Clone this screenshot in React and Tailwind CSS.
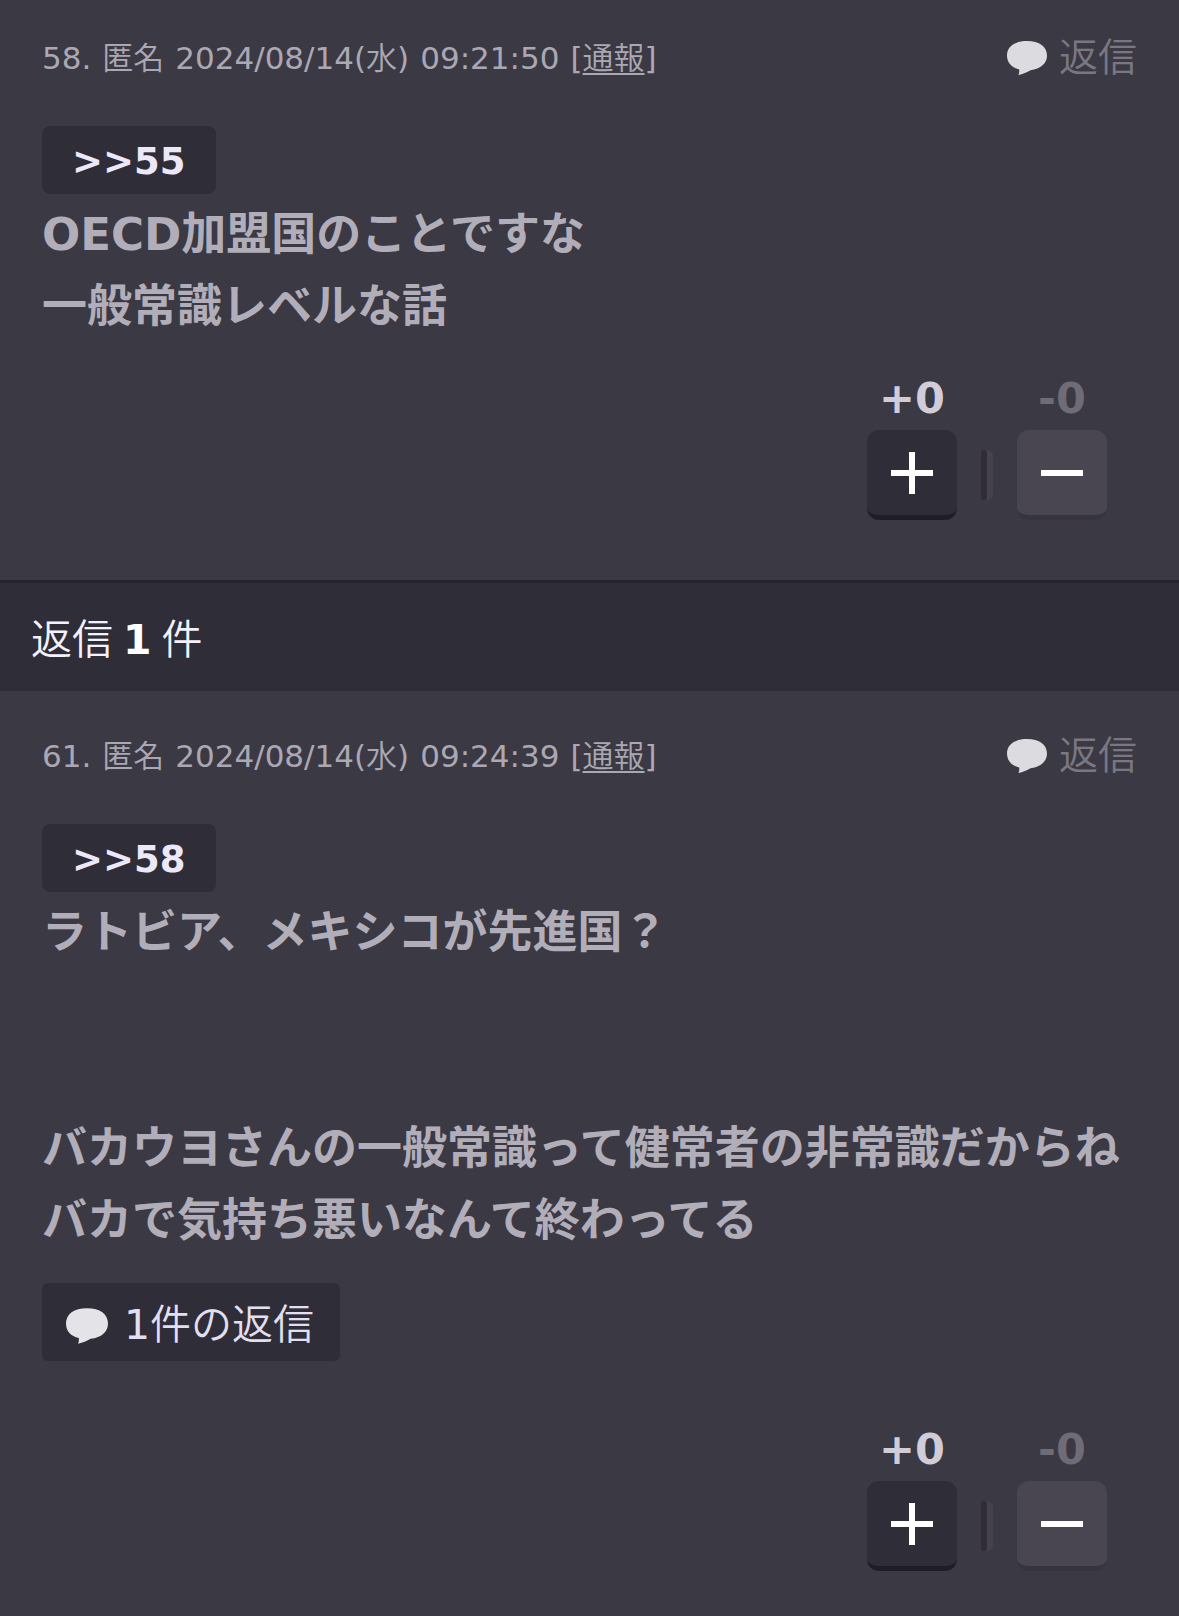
import React from 'react';
import clsx from 'clsx';

const comments = [
  {
    id: 58,
    name: '匿名',
    date: '2024/08/14',
    weekday: '水',
    time: '09:21:50',
    replyTo: 55,
    body: 'OECD加盟国のことですな\n一般常識レベルな話',
    replies: 0,
    plus: 0,
    minus: 0,
  },
  {
    id: 61,
    name: '匿名',
    date: '2024/08/14',
    weekday: '水',
    time: '09:24:39',
    replyTo: 58,
    body: 'ラトビア、メキシコが先進国？\n\n\nバカウヨさんの一般常識って健常者の非常識だからね\nバカで気持ち悪いなんて終わってる',
    replies: 1,
    plus: 0,
    minus: 0,
  },
];

const BubbleIcon = ({ className }) => (
  <svg viewBox="0 0 40 34" fill="currentColor" className={className} aria-hidden="true">
    <path d="M20 0C32.5 0 40 5.6 40 14.6C40 22.6 33.8 28 23.5 29.2C20 31.2 16 33 11.4 34C12.2 32.4 12.4 30.8 12.2 28.4C4.6 26.8 0 21.8 0 14.6C0 5.6 7.5 0 20 0Z" />
  </svg>
);

const VoteButtons = ({ plus, minus }) => (
  <div className="flex justify-end pr-[30px]">
    <div className="w-[90px]">
      <p className="text-center text-[43px] leading-[64px] font-bold text-[#d0cdd9]">+{plus}</p>
      <button
        aria-label="プラス"
        className="flex h-[90px] w-full items-center justify-center rounded-xl border-b-5 border-[#201d28] bg-[#2f2d37]"
      >
        <svg viewBox="0 0 42 42" className="h-[42px] w-[42px] fill-white">
          <path d="M18 0h6v18h18v6H24v18h-6V24H0v-6h18z" />
        </svg>
      </button>
    </div>
    <div className="mx-6 mt-[84px] flex h-[50px] w-3 rounded-md bg-[#45424d]">
      <div className="h-full w-1.5 rounded-md bg-[#302d38]" />
    </div>
    <div className="w-[90px]">
      <p className="text-center text-[43px] leading-[64px] font-bold text-[#6f6c77]">-{minus}</p>
      <button
        aria-label="マイナス"
        className="flex h-[90px] w-full items-center justify-center rounded-xl border-b-5 border-[#37343f] bg-[#494651]"
      >
        <svg viewBox="0 0 42 42" className="h-[42px] w-[42px] fill-white">
          <path d="M0 18h42v6H0z" />
        </svg>
      </button>
    </div>
  </div>
);

const Comment = ({ comment, first }) => (
  <article className={clsx('px-[42px]', first ? 'pt-[33px] pb-[60px]' : 'pt-10 pb-11')}>
    <header className="flex items-center justify-between">
      <div className="flex items-center gap-[11px] text-[31px] leading-[50px] text-[#aba8b4]">
        <span>{comment.id}.</span>
        <span className="font-[350]">{comment.name}</span>
        <span>
          {comment.date}(<span className="font-[350]">{comment.weekday}</span>)
        </span>
        <span>{comment.time}</span>
        <span>
          [<a href="#report" className="font-[350] underline decoration-2 underline-offset-4">通報</a>]
        </span>
      </div>
      <button className="flex items-center gap-3 text-[39px] leading-[50px] font-[350] text-[#7a7782]">
        <BubbleIcon className="h-[34px] w-10 text-[#dcdbe0]" />
        返信
      </button>
    </header>

    <a
      href={`#comment-${comment.replyTo}`}
      className="mt-[43px] inline-block rounded-lg bg-[#2f2d37] px-[30px] pt-1 text-[37px] leading-[64px] font-bold text-[#ebe8f8]"
    >
      &gt;&gt;{comment.replyTo}
    </a>
    <p className="mt-[5px] text-[45px] leading-[72px] font-bold whitespace-pre-line text-[#b1aeba]">
      {comment.body}
    </p>

    {comment.replies > 0 && (
      <button className="mt-[26px] mb-[33px] flex h-[78px] items-center gap-4 rounded-md bg-[#2f2d37] pt-2 pr-[26px] pl-6 text-[41px] text-[#e2dff0]">
        <BubbleIcon className="h-9 w-[42px] text-[#e4e3e8]" />
        <span>
          {comment.replies}
          <span className="font-[350]">件の返信</span>
        </span>
      </button>
    )}

    <div className="pt-[23px]">
      <VoteButtons plus={comment.plus} minus={comment.minus} />
    </div>
  </article>
);

const App = () => {
  const [parent, ...replies] = comments;

  return (
    <main className="min-h-screen bg-[#3b3943] font-['DejaVu_Sans','Noto_Sans_CJK_JP',sans-serif]">
      <Comment comment={parent} first />
      <h2 className="flex gap-2.5 border-t-3 border-[#25232d] bg-[#2f2d37] px-[31px] pt-1.5 text-[41px] leading-[102px] font-[350] text-[#f4f1fc]">
        <span>返信</span>
        <strong className="font-bold text-white">{replies.length}</strong>
        <span>件</span>
      </h2>
      {replies.map((reply) => (
        <Comment key={reply.id} comment={reply} />
      ))}
    </main>
  );
};

export default App;
